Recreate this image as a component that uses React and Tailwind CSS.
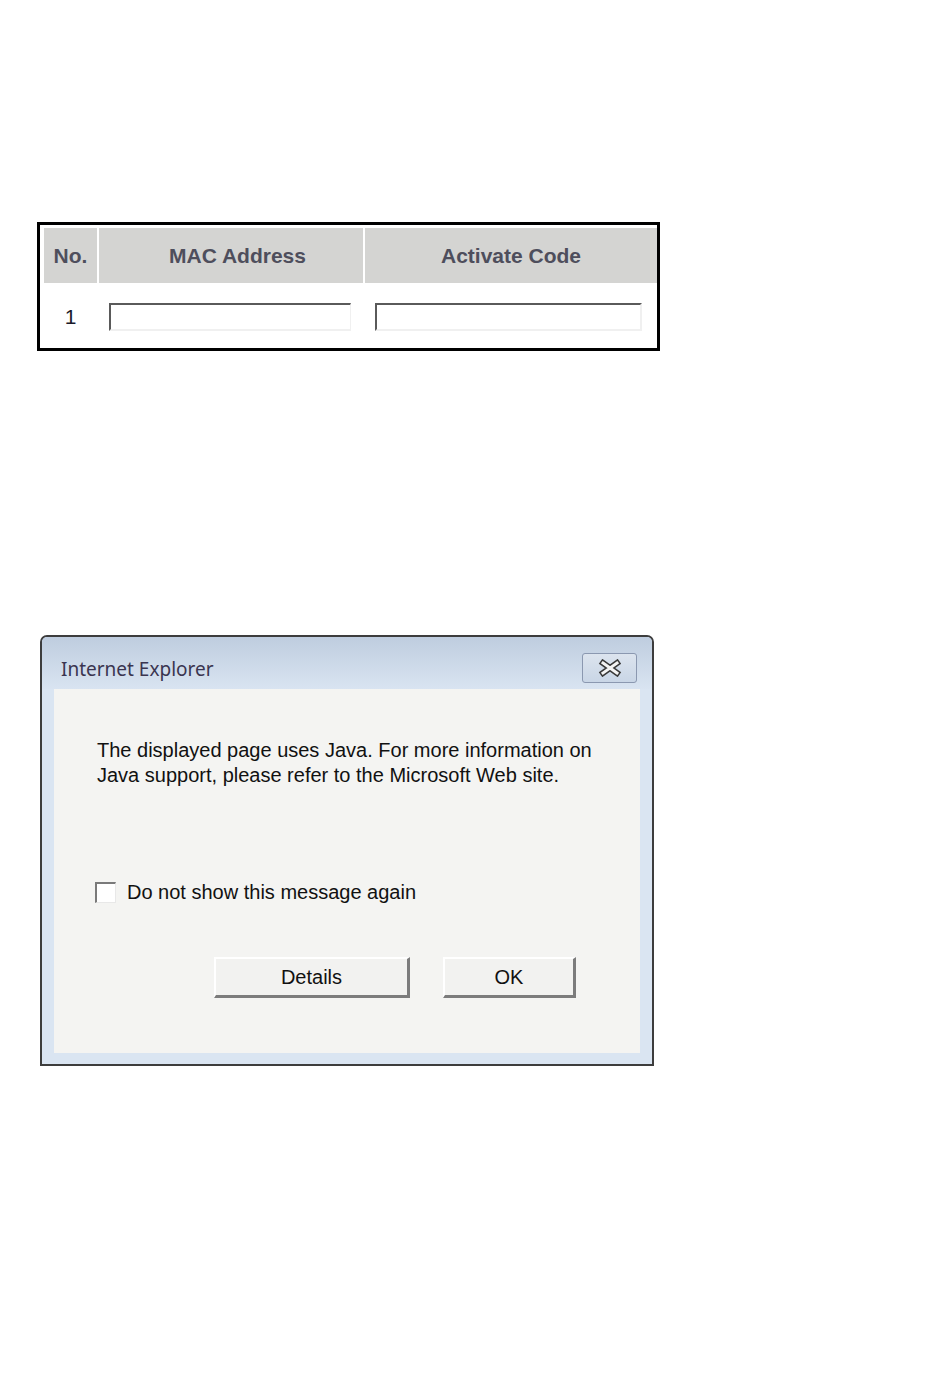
import React from "react";

const SANS = { fontFamily: '"Liberation Sans", Arial, sans-serif' };

function LicenseTable() {
  return (
    <div className="ml-[37px] w-[623px] border-[3px] border-black bg-white pl-[4px] pt-[3px]">
      {/* header row */}
      <div className="flex h-[55px] gap-[2px] text-[21px] font-bold text-[#4e4e5c]">
        <div className="flex w-[53px] items-center justify-center bg-[#d4d4d2]">No.</div>
        <div className="flex w-[264px] items-center justify-center bg-[#d4d4d2] pl-[13px]">MAC Address</div>
        <div className="flex flex-1 items-center justify-center bg-[#d4d4d2]">Activate Code</div>
      </div>
      {/* body row */}
      <div className="flex h-[65px] gap-[2px] pt-[20px]">
        <div className="flex h-[28px] w-[53px] items-center justify-center text-[21px] text-[#1a1a2a]">1</div>
        <div className="w-[264px] pl-[10px] pr-[12px]">
          <div className="h-[28px] border-t-2 border-l-2 border-r border-b-2 border-t-[#5a5a5a] border-l-[#5a5a5a] border-r-[#f0f0f0] border-b-[#f0f0f0] bg-white" />
        </div>
        <div className="flex-1 pl-[10px] pr-[15px]">
          <div className="h-[28px] border-t-2 border-l-2 border-r-2 border-b-2 border-t-[#5a5a5a] border-l-[#5a5a5a] border-r-[#f0f0f0] border-b-[#f0f0f0] bg-white" />
        </div>
      </div>
    </div>
  );
}

function CloseGlyph() {
  return (
    <svg width="24" height="18" viewBox="0 0 24 18">
      <g strokeLinecap="square">
        <path d="M5 4 L19 14 M19 4 L5 14" stroke="#3a3a3a" strokeWidth="6" />
        <path d="M5 4 L19 14 M19 4 L5 14" stroke="#f4f4f4" strokeWidth="3" />
      </g>
    </svg>
  );
}

function Button({ width, children }) {
  return (
    <div
      className={`flex h-[41px] ${width} items-center justify-center border-t-2 border-l-2 border-r-[3px] border-b-[3px] border-t-white border-l-white border-r-[#7c7c7c] border-b-[#7c7c7c] bg-[#f2f2f0] text-[20px] text-[#111]`}
    >
      {children}
    </div>
  );
}

function JavaDialog() {
  return (
    <div className="ml-[40px] mt-[284px] w-[614px] overflow-hidden rounded-t-[7px] border-2 border-[#3d3d3d] bg-[#dae5f2]">
      {/* title bar */}
      <div className="flex h-[52px] items-start justify-between bg-gradient-to-b from-[#bfcddf] to-[#d9e4f1] pl-[19px] pr-[15px]">
        <div className="pt-[18px] text-[19px] leading-[28px] text-[#3a3550]" style={{ fontFamily: '"Noto Sans", "Open Sans", sans-serif' }}>
          Internet Explorer
        </div>
        <div className="mt-[16px] flex h-[30px] w-[55px] items-center justify-center rounded-[3px] border border-[#8b98b0] bg-gradient-to-b from-[#dce4ee] to-[#c9d6e6]">
          <CloseGlyph />
        </div>
      </div>
      {/* content */}
      <div className="mx-[12px] mb-[11px] h-[364px] bg-[#f4f4f2] pl-[43px] pt-[49px]" style={SANS}>
        <p className="text-[20px] leading-[25px] text-[#111]">
          The displayed page uses Java. For more information on
          <br />
          Java support, please refer to the Microsoft Web site.
        </p>
        <div className="mt-[92px] flex items-center gap-[11px] text-[20px] leading-[24px] text-[#111]">
          <div className="-ml-[2px] h-[21px] w-[21px] border-t-2 border-l-2 border-r border-b border-t-[#7a7a7a] border-l-[#7a7a7a] border-r-[#e8e8e8] border-b-[#e8e8e8] bg-white" />
          <span>Do not show this message again</span>
        </div>
        <div className="mt-[53px] flex gap-[33px] pl-[117px]">
          <Button width="w-[196px]">Details</Button>
          <Button width="w-[133px]">OK</Button>
        </div>
      </div>
    </div>
  );
}

export default function App() {
  return (
    <div className="min-h-[1392px] w-[950px] bg-white pt-[222px]" style={SANS}>
      <LicenseTable />
      <JavaDialog />
    </div>
  );
}
